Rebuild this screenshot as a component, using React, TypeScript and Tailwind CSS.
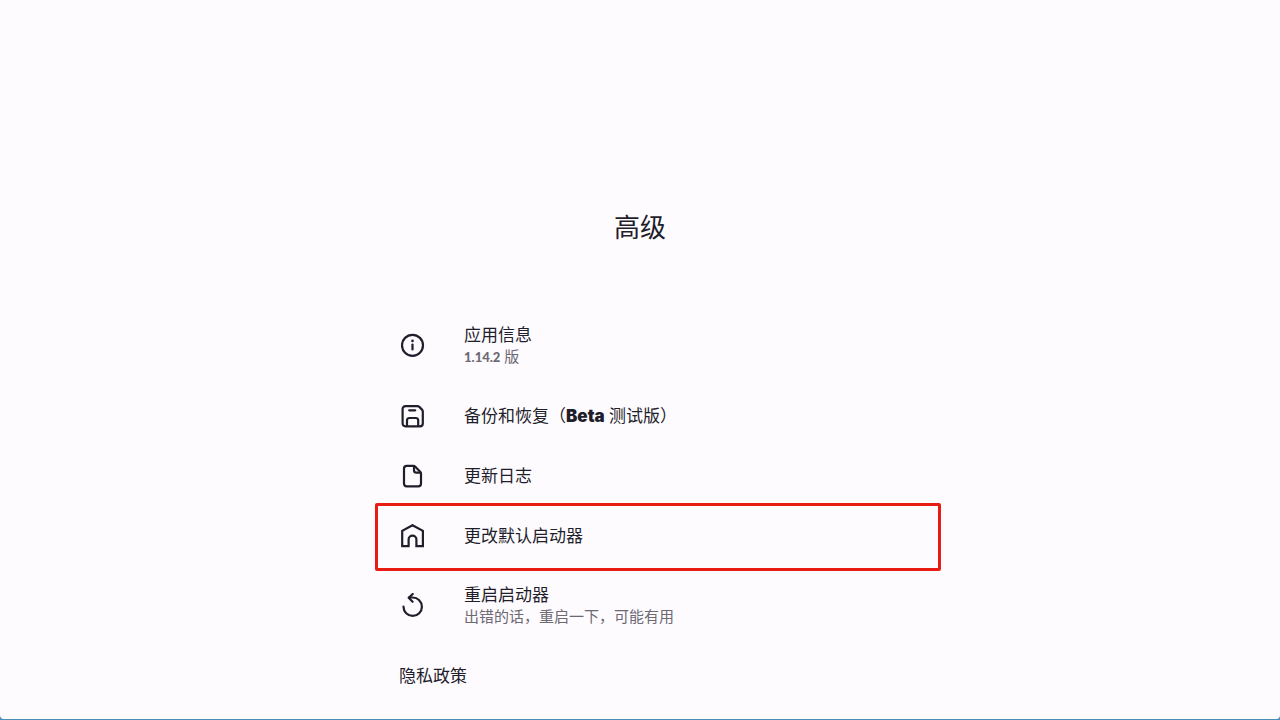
import type { ReactNode } from 'react'

type SettingRowProps = {
  icon: ReactNode
  title: ReactNode
  summary?: ReactNode
  highlighted?: boolean
}

function Icon({ children }: { children: ReactNode }) {
  return (
    <svg
      className="h-6 w-6"
      viewBox="0 0 24 24"
      fill="none"
      stroke="currentColor"
      strokeWidth="2.2"
      strokeLinecap="round"
      strokeLinejoin="round"
      aria-hidden="true"
    >
      {children}
    </svg>
  )
}

function InfoIcon() {
  return (
    <Icon>
      <circle cx="11.5" cy="12.3" r="10.5" />
      <path d="M11.5 11.5v5" />
      <circle cx="11.5" cy="7.9" r="1.3" fill="currentColor" stroke="none" />
    </Icon>
  )
}

function SaveIcon() {
  return (
    <Icon>
      <path d="M4.5 2.2h12c.7 0 1.3.3 1.8.7L21 5.600c.5.5.8 1.100.8 1.800v12c0 1.700-1.100 2.900-2.900 2.900H4.500c-1.800 0-2.900-1.200-2.900-2.900V5.100c0-1.700 1.100-2.900 2.900-2.900z" />
      <path d="M8.200 6.300h6" />
      <path d="M6 22v-5.600c0-1.500.9-2.400 2.400-2.400h6.400c1.500 0 2.400.9 2.400 2.400V22" />
    </Icon>
  )
}

function FileIcon() {
  return (
    <Icon>
      <path d="M5.700 1.900H12.500c.7 0 1.300.3 1.800.8l4.900 5.100c.5.5.8 1.100.8 1.800v10c0 1.700-1 2.800-2.700 2.800H5.700C4 22.400 3 21.300 3 19.600V4.700C3 3 4 1.900 5.700 1.900z" />
      <path d="M13 2.200v4c0 1.500.9 2.400 2.400 2.400h4" />
    </Icon>
  )
}

function HomeIcon() {
  return (
    <Icon>
      <path
        d="M11.500 1.200L21.900 6.800v15.300h-6.500v-6.600a3.900 3.900 0 0 0-7.800 0v6.600H1.200V6.800z"
        strokeLinejoin="miter"
      />
    </Icon>
  )
}

function RestartIcon() {
  return (
    <Icon>
      <path d="M2.500 13.700A9.200 9.200 0 1 0 11.700 4.500H8" />
      <path d="M11.700 1L7.700 4.700l3.900 4" />
    </Icon>
  )
}

function SettingRow({ icon, title, summary, highlighted }: SettingRowProps) {
  return (
    <li className="relative">
      <button
        type="button"
        className={`flex w-full items-center gap-[37px] text-left ${summary ? 'h-20' : 'h-15 pt-px'}`}
      >
        <span className="flex w-7 shrink-0 justify-center">{icon}</span>
        <span className="flex flex-col">
          <span className="text-[17px] leading-[22px]">{title}</span>
          {summary && (
            <span className="text-[15px] leading-5 text-[#6c6973]">{summary}</span>
          )}
        </span>
      </button>
      {highlighted && (
        <div className="pointer-events-none absolute -top-0.5 -right-15 -bottom-1.5 -left-6 rounded-xs border-3 border-[#e81c13]" />
      )}
    </li>
  )
}

export default function App() {
  return (
    <div className="flex min-h-screen flex-col bg-[#4a8fb5] pb-px">
      <main className="flex-1 rounded-b-sm bg-[#fefbff] px-6 pt-[211px] pb-3.5 font-['Lato','Noto_Sans_CJK_SC',sans-serif] text-[#1f1e2b]">
        <h1 className="text-center text-[26px] leading-8">高级</h1>
        <div className="mx-auto mt-[62px] max-w-[482px]">
          <ul>
            <SettingRow
              icon={<InfoIcon />}
              title="应用信息"
              summary={
                <>
                  <b className="text-[13px] font-black">1.14.2</b> 版
                </>
              }
            />
            <SettingRow
              icon={<SaveIcon />}
              title={
                <>
                  备份和恢复（<b className="font-['Inter',sans-serif] font-black">Beta</b> 测试版）
                </>
              }
            />
            <SettingRow icon={<FileIcon />} title="更新日志" />
            <SettingRow icon={<HomeIcon />} title="更改默认启动器" highlighted />
            <SettingRow
              icon={<RestartIcon />}
              title="重启启动器"
              summary="出错的话，重启一下，可能有用"
            />
          </ul>
          <a href="#privacy" className="flex h-15 items-center pt-0.5 text-[17px] leading-[22px]">
            隐私政策
          </a>
        </div>
      </main>
    </div>
  )
}
